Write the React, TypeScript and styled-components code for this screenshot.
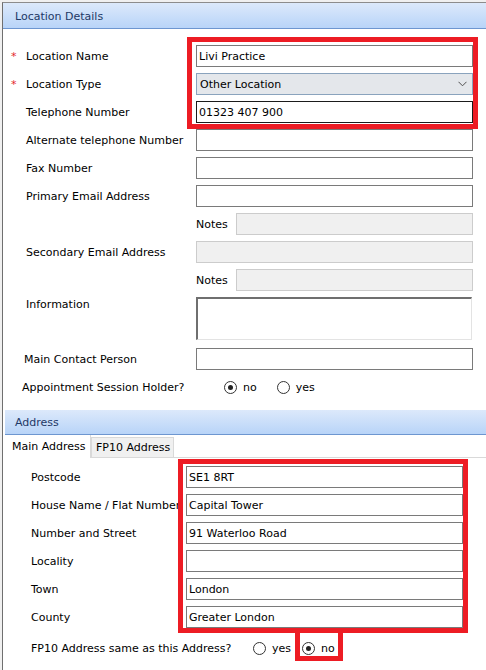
import React from 'react';
import styled, { createGlobalStyle } from 'styled-components';

const Global = createGlobalStyle`
  html, body { margin: 0; padding: 0; background: #f0f0f0; }
  body {
    font-family: "DejaVu Sans", Verdana, sans-serif;
    font-size: 11px;
    color: #000;
  }
  #root { width: 486px; height: 670px; overflow: hidden; }
  * { box-sizing: border-box; }
`;

const Window = styled.div`
  position: relative;
  margin: 2px 0 0 2px;
  height: 668px;
  background: #fff;
  border-left: 1px solid #6f6f6f;
  border-top: 1px solid #8c8c8c;
`;

const Section = styled.section<{ $inset?: number }>`
  margin-left: ${p => p.$inset ?? 0}px;
`;

const Header = styled.div<{ $h: number; $pad: number; $pt?: number }>`
  height: ${p => p.$h}px;
  display: flex;
  align-items: center;
  padding-left: ${p => p.$pad}px;
  padding-top: ${p => p.$pt ?? 0}px;
  background: linear-gradient(#dce9fb, #b8d4f8);
  border-bottom: 1px solid #6d96d0;
  color: #1e3966;
`;

const Body = styled.div<{ $pt: number; $pb: number }>`
  padding-top: ${p => p.$pt}px;
  padding-bottom: ${p => p.$pb}px;
`;

const Row = styled.div<{ $cols: string; $h?: number; $top?: boolean; $mt?: number }>`
  display: grid;
  grid-template-columns: ${p => p.$cols};
  height: ${p => p.$h ?? 28}px;
  margin-top: ${p => p.$mt ?? 0}px;
  align-items: ${p => (p.$top ? 'start' : 'center')};
`;

const Label = styled.div<{ $indent: number; $pt?: number }>`
  padding-left: ${p => p.$indent}px;
  padding-top: ${p => p.$pt ?? 2}px;
  white-space: nowrap;
  overflow: hidden;
  line-height: 14px;
`;

const Star = styled.span`
  display: inline-block;
  width: 15px;
  color: #e3262b;
`;

const TextBox = styled.input<{ $focus?: boolean }>`
  display: block;
  width: 277px;
  height: 22px;
  margin: 0;
  padding: 0 0 0 2px;
  border: 1px solid ${p => (p.$focus ? '#1b1b1b' : '#7a7a7a')};
  background: #fff;
  font: inherit;
  color: #000;
  outline: none;
`;

const DisabledBox = styled.div<{ $w?: number }>`
  width: ${p => (p.$w ? `${p.$w}px` : '277px')};
  height: 22px;
  background: #f0f0f0;
  border: 1px solid #cccccc;
`;

const SelectBox = styled.div`
  width: 277px;
  height: 22px;
  display: flex;
  align-items: center;
  justify-content: space-between;
  padding: 0 5px 0 3px;
  background: #e4e7eb;
  border: 1px solid #8aa3bd;
`;

const NotesLine = styled.div`
  display: flex;
  align-items: center;
  width: 277px;
`;

const NotesLabel = styled.span`
  width: 40px;
  padding-top: 2px;
  line-height: 14px;
`;

const Area = styled.textarea`
  display: block;
  margin: 3px 0 0 0;
  width: 276px;
  height: 43px;
  resize: none;
  padding: 2px;
  font: inherit;
  background: #fff;
  border-top: 2px solid #6f6f6f;
  border-left: 2px solid #6f6f6f;
  border-right: 1px solid #e3e3e3;
  border-bottom: 1px solid #e3e3e3;
  outline: none;
`;

const RadioGroup = styled.div<{ $gap: number }>`
  display: flex;
  align-items: center;
  gap: ${p => p.$gap}px;
`;

const RadioOption = styled.span`
  display: flex;
  align-items: center;
  gap: 6px;
  line-height: 14px;
`;

const RadioText = styled.span`
  padding-top: 2px;
`;

const RadioCircle = styled.span<{ $checked?: boolean }>`
  position: relative;
  width: 13px;
  height: 13px;
  border-radius: 50%;
  border: 1px solid #333;
  background: #fff;
  &::after {
    content: '';
    display: ${p => (p.$checked ? 'block' : 'none')};
    position: absolute;
    left: 3px;
    top: 3px;
    width: 5px;
    height: 5px;
    border-radius: 50%;
    background: #222;
  }
`;

const TabStrip = styled.div`
  display: flex;
  align-items: flex-end;
  height: 23px;
  border-bottom: 1px solid #d9d9d9;
`;

const Tab = styled.div<{ $active?: boolean }>`
  display: flex;
  align-items: center;
  height: ${p => (p.$active ? 23 : 20)}px;
  margin-bottom: ${p => (p.$active ? -1 : 0)}px;
  padding-left: ${p => (p.$active ? 7 : 4)}px;
  padding-top: 1px;
  width: ${p => (p.$active ? 86 : 83)}px;
  background: ${p => (p.$active ? '#fff' : '#f0f0f0')};
  border: 1px solid #d9d9d9;
  border-left: ${p => (p.$active ? 'none' : '1px solid #d9d9d9')};
  border-top: ${p => (p.$active ? 'none' : '1px solid #d9d9d9')};
  border-bottom: none;
  line-height: 14px;
`;

const AddrBody = styled.div`
  padding-top: 5px;
`;

const RedBox = styled.div<{ $l: number; $t: number; $w: number; $h: number }>`
  position: absolute;
  left: ${p => p.$l}px;
  top: ${p => p.$t}px;
  width: ${p => p.$w}px;
  height: ${p => p.$h}px;
  border: 5px solid #ed1c24;
  pointer-events: none;
`;

const Chevron = () => (
  <svg width="9" height="6" viewBox="0 0 9 6">
    <polyline points="0.5,0.8 4.5,4.8 8.5,0.8" fill="none" stroke="#505050" strokeWidth="1" />
  </svg>
);

const C1 = '193px 277px';
const C2 = '181px 277px';

type Field = { label: string; value?: string };

const Input = ({ value, focus }: { value?: string; focus?: boolean }) => (
  <TextBox readOnly defaultValue={value ?? ''} $focus={focus} />
);

export default function App() {
  const address: Field[] = [
    { label: 'Postcode', value: 'SE1 8RT' },
    { label: 'House Name / Flat Number', value: 'Capital Tower' },
    { label: 'Number and Street', value: '91 Waterloo Road' },
    { label: 'Locality', value: '' },
    { label: 'Town', value: 'London' },
    { label: 'County', value: 'Greater London' },
  ];

  return (
    <>
      <Global />
      <Window>
        <Section>
          <Header $h={26} $pad={12} $pt={2}>Location Details</Header>
          <Body $pt={13} $pb={9}>
            <Row $cols={C1}>
              <Label $indent={8}><Star>*</Star>Location Name</Label>
              <Input value="Livi Practice" />
            </Row>
            <Row $cols={C1}>
              <Label $indent={8}><Star>*</Star>Location Type</Label>
              <SelectBox>
                <span>Other Location</span>
                <Chevron />
              </SelectBox>
            </Row>
            <Row $cols={C1}>
              <Label $indent={23}>Telephone Number</Label>
              <Input value="01323 407 900" focus />
            </Row>
            <Row $cols={C1}>
              <Label $indent={23}>Alternate telephone Number</Label>
              <Input />
            </Row>
            <Row $cols={C1}>
              <Label $indent={23}>Fax Number</Label>
              <Input />
            </Row>
            <Row $cols={C1}>
              <Label $indent={23}>Primary Email Address</Label>
              <Input />
            </Row>
            <Row $cols={C1}>
              <span />
              <NotesLine>
                <NotesLabel>Notes</NotesLabel>
                <DisabledBox $w={237} />
              </NotesLine>
            </Row>
            <Row $cols={C1}>
              <Label $indent={23}>Secondary Email Address</Label>
              <DisabledBox />
            </Row>
            <Row $cols={C1}>
              <span />
              <NotesLine>
                <NotesLabel>Notes</NotesLabel>
                <DisabledBox $w={237} />
              </NotesLine>
            </Row>
            <Row $cols={C1} $h={51} $top>
              <Label $indent={23} $pt={4}>Information</Label>
              <Area readOnly />
            </Row>
            <Row $cols={C1}>
              <Label $indent={21}>Main Contact Person</Label>
              <Input />
            </Row>
            <Row $cols="221px 250px">
              <Label $indent={19}>Appointment Session Holder?</Label>
              <RadioGroup $gap={20}>
                <RadioOption><RadioCircle $checked /><RadioText>no</RadioText></RadioOption>
                <RadioOption><RadioCircle /><RadioText>yes</RadioText></RadioOption>
              </RadioGroup>
            </Row>
          </Body>
        </Section>

        <Section $inset={2}>
          <Header $h={25} $pad={10} $pt={1}>Address</Header>
          <TabStrip>
            <Tab $active>Main Address</Tab>
            <Tab>FP10 Address</Tab>
          </TabStrip>
          <AddrBody>
            {address.map(f => (
              <Row key={f.label} $cols={C2}>
                <Label $indent={26}>{f.label}</Label>
                <Input value={f.value} />
              </Row>
            ))}
            <Row $cols="248px 200px" $mt={3}>
              <Label $indent={26}>FP10 Address same as this Address?</Label>
              <RadioGroup $gap={11}>
                <RadioOption><RadioCircle /><RadioText>yes</RadioText></RadioOption>
                <RadioOption><RadioCircle $checked /><RadioText>no</RadioText></RadioOption>
              </RadioGroup>
            </Row>
          </AddrBody>
        </Section>

        <RedBox $l={184} $t={34} $w={291} $h={92} />
        <RedBox $l={175} $t={456} $w={290} $h={174} />
        <RedBox $l={292} $t={625} $w={48} $h={33} />
      </Window>
    </>
  );
}
